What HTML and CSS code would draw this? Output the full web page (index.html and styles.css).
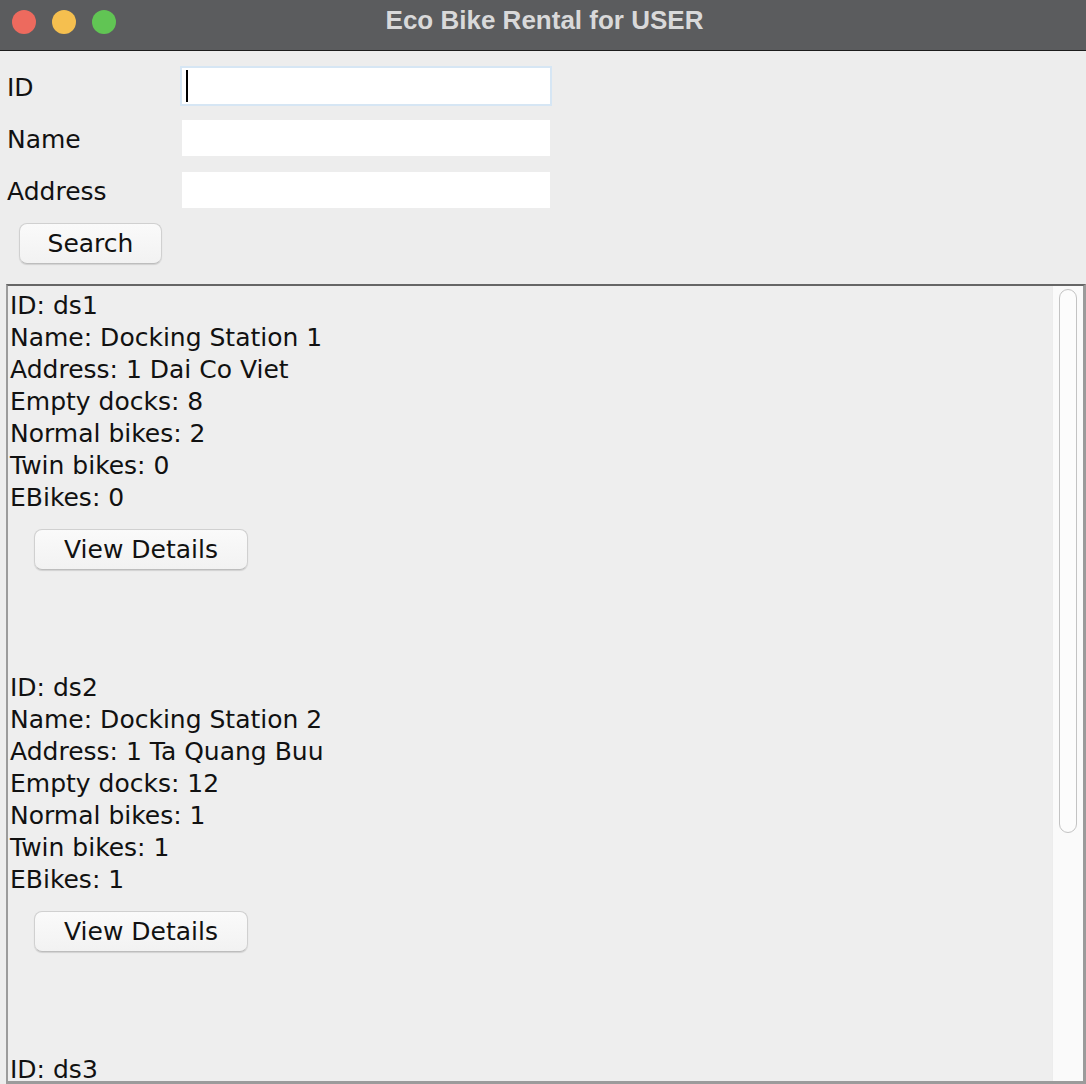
FILE: index.html
```html
<!DOCTYPE html>
<html>
<head>
<meta charset="utf-8">
<title>Eco Bike Rental for USER</title>
<link rel="stylesheet" href="styles.css">
</head>
<body>
<div class="window">
  <div class="titlebar">
    <div class="lights">
      <span class="light red"></span>
      <span class="light yellow"></span>
      <span class="light green"></span>
    </div>
    <div class="title">Eco Bike Rental for USER</div>
  </div>

  <div class="form">
    <label class="label">ID</label>
    <div class="field focused"><span class="caret"></span></div>
    <label class="label">Name</label>
    <div class="field"></div>
    <label class="label">Address</label>
    <div class="field"></div>
  </div>
  <div class="search-row">
    <button class="btn search">Search</button>
  </div>

  <div class="list">
    <div class="list-content">
      <div class="item">
        <div class="line">ID: ds1</div>
        <div class="line">Name: Docking Station 1</div>
        <div class="line">Address: 1 Dai Co Viet</div>
        <div class="line">Empty docks: 8</div>
        <div class="line">Normal bikes: 2</div>
        <div class="line">Twin bikes: 0</div>
        <div class="line">EBikes: 0</div>
        <button class="btn details">View Details</button>
      </div>
      <div class="item">
        <div class="line">ID: ds2</div>
        <div class="line">Name: Docking Station 2</div>
        <div class="line">Address: 1 Ta Quang Buu</div>
        <div class="line">Empty docks: 12</div>
        <div class="line">Normal bikes: 1</div>
        <div class="line">Twin bikes: 1</div>
        <div class="line">EBikes: 1</div>
        <button class="btn details">View Details</button>
      </div>
      <div class="item">
        <div class="line">ID: ds3</div>
      </div>
    </div>
    <div class="scrollbar">
      <div class="thumb"></div>
    </div>
  </div>
</div>
</body>
</html>
```

FILE: styles.css
```css
* { box-sizing: border-box; }

html, body {
  margin: 0;
  padding: 0;
  width: 1086px;
  height: 1084px;
  overflow: hidden;
  background: #ededed;
}

.window {
  width: 1086px;
  height: 1084px;
  display: flex;
  flex-direction: column;
  font-family: "DejaVu Sans", "Open Sans", sans-serif;
  font-size: 25px;
  color: #111;
  background: #ededed;
}

.titlebar {
  position: relative;
  height: 51px;
  flex: 0 0 51px;
  background: #5b5c5e;
  border-bottom: 1px solid #1c1c1c;
  display: flex;
  justify-content: center;
}

.lights {
  position: absolute;
  left: 12px;
  top: 10px;
  display: flex;
  gap: 16px;
}

.light {
  width: 24px;
  height: 24px;
  border-radius: 50%;
  display: block;
}
.light.red { background: #ed6a5e; }
.light.yellow { background: #f5bf4f; }
.light.green { background: #61c554; }

.title {
  font-family: "Liberation Sans", Arial, sans-serif;
  font-weight: bold;
  font-size: 26px;
  line-height: 41px;
  color: #d9d9da;
  padding-left: 3px;
}

.form {
  display: grid;
  grid-template-columns: 175px 368px;
  grid-auto-rows: 36px;
  row-gap: 16px;
  padding: 17px 0 0 7px;
  align-items: center;
}

.label {
  height: 36px;
  line-height: 32px;
  padding-top: 4px;
}

.field {
  height: 36px;
  background: #ffffff;
  display: flex;
  align-items: flex-start;
}

.field.focused {
  box-shadow: 0 0 0 2px #d6e6f4;
}

.caret {
  display: block;
  width: 2px;
  height: 32px;
  margin: 2px 0 0 4px;
  background: #000;
}

.search-row {
  padding: 15px 0 0 19px;
}

.btn {
  font-family: "DejaVu Sans", "Open Sans", sans-serif;
  font-size: 25px;
  color: #111;
  height: 41px;
  padding: 0;
  background: linear-gradient(#fafafa, #f2f2f2);
  border: 1px solid #d0d0d0;
  border-bottom-color: #bdbdbd;
  border-radius: 8px;
  box-shadow: 0 1px 1px rgba(0, 0, 0, 0.12);
  line-height: 38px;
  text-align: center;
  display: block;
}

.search { width: 143px; }

.list {
  margin: 20px 0 0 6px;
  flex: 1 1 auto;
  min-height: 0;
  display: flex;
  border-top: 2px solid #666666;
  border-left: 2px solid #9b9b9b;
  border-right: 3px solid #9b9b9b;
  border-bottom: 3px solid #9b9b9b;
  overflow: hidden;
}

.list-content {
  flex: 1 1 auto;
  padding: 4px 0 0 2px;
  overflow: hidden;
  background: #eeeeee;
}

.item {
  padding-bottom: 102px;
}

.line {
  line-height: 32px;
  height: 32px;
  white-space: nowrap;
}

.details {
  width: 214px;
  margin: 15px 0 0 24px;
}

.scrollbar {
  flex: 0 0 31px;
  background: #fafafa;
  border-left: 1px solid #ececec;
  padding: 3px 0 0 6px;
}

.thumb {
  width: 18px;
  height: 544px;
  border: 1px solid #c3c3c3;
  border-radius: 9px;
  background: #fcfcfc;
}
```
